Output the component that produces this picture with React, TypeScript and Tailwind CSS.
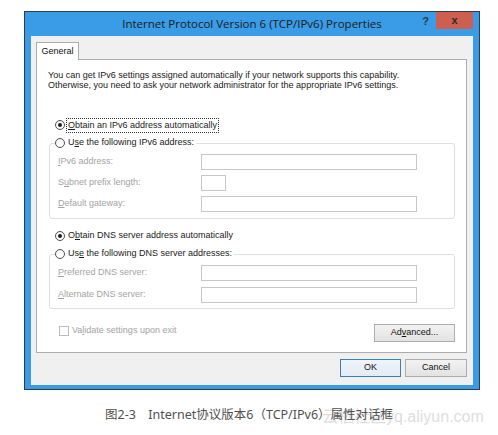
import React from "react";

const ui = { fontFamily: '"Liberation Sans", Arial, sans-serif' };

function Radio({ checked }: { checked?: boolean }) {
  return (
    <span className="flex h-[10px] w-[10px] shrink-0 items-center justify-center rounded-full border border-[#4f4f4f] bg-gradient-to-b from-[#f4f4f4] to-[#ffffff]">
      {checked && <span className="h-[4px] w-[4px] rounded-full bg-[#1e1e1e]" />}
    </span>
  );
}

function U({ children }: { children: React.ReactNode }) {
  return <span className="underline underline-offset-[1px]">{children}</span>;
}

function Field({ label, short }: { label: React.ReactNode; short?: boolean }) {
  return (
    <div className="flex h-[16px] items-center">
      <span className="w-[151px] pl-[8px] text-[#a3a3a3]">{label}</span>
      <span className={`h-[16px] border border-[#c8c8c8] bg-white ${short ? "w-[25px]" : "w-[216px]"}`} />
    </div>
  );
}

export default function App() {
  return (
    <div className="relative h-[435px] w-[498px] overflow-hidden bg-white" style={ui}>
      {/* window */}
      <div className="ml-[24px] mt-[11px] flex h-[379px] w-[456px] flex-col border border-[#2f3d4a] bg-[#3a9be6]">
        {/* title bar */}
        <div className="relative flex h-[24px] shrink-0 items-center justify-center">
          <span className="text-[11.5px] text-[#1b1b1b]" style={{ fontFamily: '"Open Sans", "Noto Sans", sans-serif' }}>
            Internet Protocol Version 6 (TCP/IPv6) Properties
          </span>
          <span className="absolute right-[50px] top-[1px] text-[11px] font-bold text-[#2a3a48]">?</span>
          <span className="absolute right-[6px] top-0 flex h-[17px] w-[37px] items-center justify-center bg-[#cc5f50] text-[11px] font-bold text-[#2a2a2a]">
            x
          </span>
        </div>
        {/* client */}
        <div className="mx-[6px] flex flex-1 flex-col bg-[#f0f0f0] pl-[5px] pr-[6px] pt-[6px]">
          {/* tab strip */}
          <div className="relative z-10 flex h-[18px]">
            <div className="flex h-[18px] w-[43px] items-center justify-center border border-b-0 border-[#acacac] bg-white text-[9px] text-[#111]">
              General
            </div>
          </div>
          {/* panel */}
          <div className="-mt-[1px] flex h-[294px] flex-col border border-[#acacac] bg-white pl-[12px] pr-[11px] pt-[10px] text-[9px] text-[#1a1a1a]">
            <div className="ml-[-1px] leading-[10px]">
              <div>You can get IPv6 settings assigned automatically if your network supports this capability.</div>
              <div>Otherwise, you need to ask your network administrator for the appropriate IPv6 settings.</div>
            </div>

            <div className="ml-[6px] mt-[28px] flex h-[14px] items-center gap-[2px]">
              <Radio checked />
              <span className="px-[1px] leading-[13px] outline outline-1 outline-dotted outline-[#333]">
                <U>O</U>btain an IPv6 address automatically
              </span>
            </div>

            <fieldset className="mt-[4px] h-[83px] w-[406px] rounded-[3px] border border-[#dcdfe3]">
              <legend className="ml-[5px] flex h-[14px] items-center gap-[3px] pr-[2px]">
                <Radio />
                <span>
                  U<U>s</U>e the following IPv6 address:
                </span>
              </legend>
              <div className="mt-[4px] flex flex-col gap-[5px]">
                <Field label={<><U>I</U>Pv6 address:</>} />
                <Field label={<>S<U>u</U>bnet prefix length:</>} short />
                <Field label={<><U>D</U>efault gateway:</>} />
              </div>
            </fieldset>

            <div className="ml-[6px] mt-[10px] flex h-[14px] items-center gap-[3px]">
              <Radio checked />
              <span>
                O<U>b</U>tain DNS server address automatically
              </span>
            </div>

            <fieldset className="mt-[4px] h-[62px] w-[406px] rounded-[3px] border border-[#dcdfe3]">
              <legend className="ml-[5px] flex h-[14px] items-center gap-[3px] pr-[2px]">
                <Radio />
                <span>
                  Us<U>e</U> the following DNS server addresses:
                </span>
              </legend>
              <div className="mt-[4px] flex flex-col gap-[6px]">
                <Field label={<><U>P</U>referred DNS server:</>} />
                <Field label={<><U>A</U>lternate DNS server:</>} />
              </div>
            </fieldset>

            <div className="mt-[15px] flex w-[406px] items-start justify-between">
              <div className="ml-[10px] flex items-center gap-[3px]">
                <span className="h-[10px] w-[10px] border border-[#bcbcbc] bg-white" />
                <span className="text-[#a3a3a3]">
                  Va<U>l</U>idate settings upon exit
                </span>
              </div>
              <div className="flex h-[18px] w-[81px] items-center justify-center border border-[#adadad] bg-gradient-to-b from-[#f2f2f2] to-[#e3e3e3] text-[#111]">
                Ad<U>v</U>anced...
              </div>
            </div>
          </div>
          {/* buttons */}
          <div className="mt-[6px] flex justify-end gap-[4px] text-[9px] text-[#111]">
            <div className="flex h-[18px] w-[61px] items-center justify-center border border-[#3c7fb1] bg-gradient-to-b from-[#eef5fb] to-[#e3ecf4]">
              OK
            </div>
            <div className="flex h-[18px] w-[62px] items-center justify-center border border-[#adadad] bg-gradient-to-b from-[#f2f2f2] to-[#e3e3e3]">
              Cancel
            </div>
          </div>
        </div>
        <div className="h-[4px] shrink-0" />
      </div>

      {/* caption */}
      <div className="relative mt-[16px] h-[20px]">
        <span
          className="absolute left-[322px] top-[-1px] whitespace-nowrap text-[16px] text-[#dedede]"
          style={{ fontFamily: '"Liberation Sans", "Noto Sans CJK SC", sans-serif' }}
        >
          云栖社区yq.aliyun.com
        </span>
        <span
          className="absolute left-[105px] top-0 whitespace-nowrap text-[12.5px] text-[#505050]"
          style={{ fontFamily: '"Noto Sans", "Noto Sans CJK SC", sans-serif' }}
        >
          图2-3　Internet协议版本6（TCP/IPv6）属性对话框
        </span>
      </div>
    </div>
  );
}
